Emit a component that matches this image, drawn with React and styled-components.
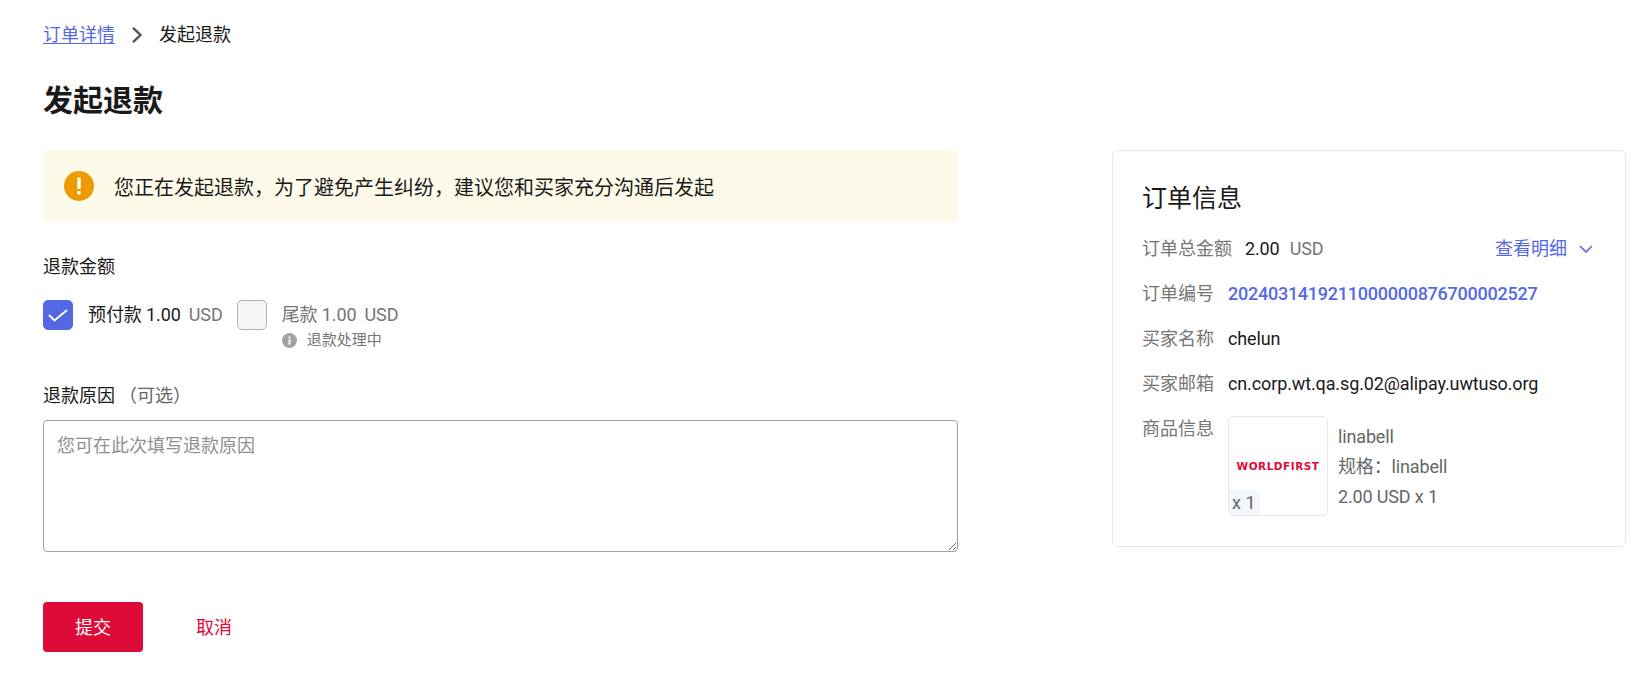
import React from 'react';
import styled, { createGlobalStyle } from 'styled-components';

const Global = createGlobalStyle`
  html, body { margin: 0; padding: 0; background: #fff; }
  body { font-family: Roboto, "Noto Sans CJK SC", sans-serif; color: #1a1a1a; font-size: 18px; }
`;
const Page = styled.div`
  width: 1635px; height: 697px; box-sizing: border-box; overflow: hidden;
  padding: 23px 9px 0 43px;
`;
const Breadcrumb = styled.nav`
  display: flex; align-items: center; height: 24px; font-size: 18px; line-height: 24px;
`;
const CrumbLink = styled.a`
  color: #5468e6; text-decoration: underline; text-underline-offset: 2px;
`;
const CrumbSep = styled.svg`
  width: 12px; height: 16px; margin: 0 16px 0 16px;
`;
const Title = styled.h1`
  margin: 33px 0 0; font-size: 30px; line-height: 42px; font-weight: 700; color: #1a1a1a;
`;
const Columns = styled.div`
  display: flex; justify-content: space-between; margin-top: 28px;
`;
const Main = styled.main`
  width: 915px;
`;
const Alert = styled.div`
  display: flex; align-items: center; gap: 20px; height: 72px; padding: 0 21px;
  background: #fefae9; border-radius: 4px; font-size: 20px; color: #1a1a1a;
`;
const Label = styled.div`
  font-size: 18px; line-height: 24px; color: #1a1a1a;
`;
const AmountLabel = styled(Label)`
  margin-top: 33px;
`;
const ReasonLabel = styled(Label)`
  margin-top: 34px;
`;
const Optional = styled.span`
  color: #666; margin-left: 4px;
`;
const Options = styled.div`
  display: flex; gap: 14px; margin-top: 21px;
`;
const Option = styled.div`
  display: flex; gap: 15px;
`;
const Box = styled.span`
  width: 30px; height: 30px; box-sizing: border-box; border-radius: 5px; flex: none;
  display: flex; align-items: center; justify-content: center;
  background: ${p => (p.$checked ? '#5468e6' : '#f5f5f5')};
  border: 1px solid ${p => (p.$checked ? '#5468e6' : '#b0b0b0')};
`;
const OptText = styled.div`
  font-size: 18px; line-height: 30px; letter-spacing: -0.1px; color: ${p => (p.$muted ? '#757575' : '#1a1a1a')};
`;
const Unit = styled.span`
  color: #757575; margin-left: ${p => (p.$flush ? -3 : 8)}px; letter-spacing: -0.1px;
`;
const Hint = styled.div`
  display: flex; align-items: center; gap: 10px; font-size: 15px; line-height: 20px; color: #757575;
`;
const TextArea = styled.textarea`
  display: block; width: 100%; height: 132px; box-sizing: border-box; margin-top: 12px;
  border: 1px solid #a3a3a3; border-radius: 4px; padding: 13px 13px; outline: none;
  font: 18px/24px Roboto, "Noto Sans CJK SC", sans-serif; color: #1a1a1a;
  &::placeholder { color: #8f8f8f; opacity: 1; }
`;
const Actions = styled.div`
  display: flex; align-items: center; margin-top: 50px;
`;
const Submit = styled.button`
  width: 100px; height: 50px; border: 0; border-radius: 4px; background: #de0a37; color: #fff;
  font: 18px Roboto, "Noto Sans CJK SC", sans-serif; padding: 0 0 2px;
`;
const Cancel = styled.button`
  width: 100px; height: 50px; border: 0; background: none; color: #de0a37; margin-left: 21px;
  font: 18px Roboto, "Noto Sans CJK SC", sans-serif; padding: 0 0 2px;
`;
const Card = styled.aside`
  width: 514px; height: 397px; box-sizing: border-box; border: 1px solid #e6e6e6; border-radius: 6px;
  padding: 31px 30px 0 29px;
`;
const CardTitle = styled.h2`
  margin: 0; font-size: 25px; line-height: 34px; font-weight: 400; color: #1a1a1a;
`;
const Row = styled.div`
  display: flex; align-items: flex-start; gap: ${p => p.$gap || 14}px; font-size: 18px; line-height: 24px; margin-top: ${p => p.$mt || 21}px;
`;
const Key = styled.span`
  color: #757575; flex: none;
`;
const Value = styled.span`
  color: ${p => p.$link ? '#5468e6' : '#1a1a1a'}; font-weight: ${p => p.$link ? 500 : 400};
  letter-spacing: ${p => p.$link ? -0.25 : -0.12}px;
`;
const Details = styled.a`
  margin-left: auto; margin-right: 2px; color: #5468e6; display: flex; align-items: center; gap: 12px;
`;
const Thumb = styled.div`
  position: relative; width: 100px; height: 100px; box-sizing: border-box; flex: none;
  border: 1px solid #e6e6e6; border-radius: 6px; display: flex; align-items: center; justify-content: center;
  margin-top: -1px;
`;
const Brand = styled.span`
  font-family: "DejaVu Sans", sans-serif; font-weight: 700; font-size: 10.5px; letter-spacing: .5px; color: #de0a37;
`;
const Qty = styled.span`
  position: absolute; left: 0; bottom: 0; width: 31px; height: 25px; padding-left: 3px; box-sizing: border-box;
  background: #f2f6fd; border-radius: 0 6px 0 6px; font-size: 18px; line-height: 26px; color: #666;
`;
const Product = styled.div`
  margin-left: -4px; padding-top: 5px; line-height: 30px; color: #666; letter-spacing: -0.15px;
`;

export default function App() {
  return (
    <Page>
      <Global />
      <Breadcrumb>
        <CrumbLink>订单详情</CrumbLink>
        <CrumbSep viewBox="0 0 12 16"><path d="M2 .8 9.5 8 2 15.2" fill="none" stroke="#555" strokeWidth="2.4" /></CrumbSep>
        <span>发起退款</span>
      </Breadcrumb>
      <Title>发起退款</Title>
      <Columns>
        <Main>
          <Alert>
            <svg width="30" height="30" viewBox="0 0 30 30"><circle cx="15" cy="15" r="15" fill="#ec9c00" /><rect x="13.2" y="6.5" width="3.6" height="11.5" rx="1" fill="#fefae9" /><rect x="13.2" y="20" width="3.6" height="3.6" rx="1" fill="#fefae9" /></svg>
            <span>您正在发起退款，为了避免产生纠纷，建议您和买家充分沟通后发起</span>
          </Alert>
          <AmountLabel>退款金额</AmountLabel>
          <Options>
            <Option>
              <Box $checked><svg width="20" height="13" viewBox="0 0 20 13"><path d="M1 6l5.5 5.5L19 1" fill="none" stroke="#fff" strokeWidth="2" /></svg></Box>
              <OptText>预付款 1.00<Unit>USD</Unit></OptText>
            </Option>
            <Option>
              <Box />
              <div>
                <OptText $muted>尾款 1.00<Unit>USD</Unit></OptText>
                <Hint>
                  <svg width="15" height="15" viewBox="0 0 15 15"><circle cx="7.5" cy="7.5" r="7.5" fill="#a3a3a3" /><rect x="6.5" y="6.5" width="2" height="5" fill="#fff" /><rect x="6.5" y="3.5" width="2" height="2" fill="#fff" /></svg>
                  退款处理中
                </Hint>
              </div>
            </Option>
          </Options>
          <ReasonLabel>退款原因<Optional>（可选）</Optional></ReasonLabel>
          <TextArea placeholder="您可在此次填写退款原因" />
          <Actions>
            <Submit>提交</Submit>
            <Cancel>取消</Cancel>
          </Actions>
        </Main>
        <Card>
          <CardTitle>订单信息</CardTitle>
          <Row $mt={21} $gap={13}>
            <Key>订单总金额</Key>
            <Value>2.00</Value>
            <Unit $flush>USD</Unit>
            <Details>查看明细<svg width="14" height="8" viewBox="0 0 14 8"><path d="M1 1l6 6 6-6" fill="none" stroke="#5468e6" strokeWidth="1.6" /></svg></Details>
          </Row>
          <Row><Key>订单编号</Key><Value $link>2024031419211000000876700002527</Value></Row>
          <Row><Key>买家名称</Key><Value>chelun</Value></Row>
          <Row><Key>买家邮箱</Key><Value>cn.corp.wt.qa.sg.02@alipay.uwtuso.org</Value></Row>
          <Row>
            <Key>商品信息</Key>
            <Thumb><Brand>WORLDFIRST</Brand><Qty>x 1</Qty></Thumb>
            <Product>linabell<br />规格：linabell<br />2.00 USD x 1</Product>
          </Row>
        </Card>
      </Columns>
    </Page>
  );
}
